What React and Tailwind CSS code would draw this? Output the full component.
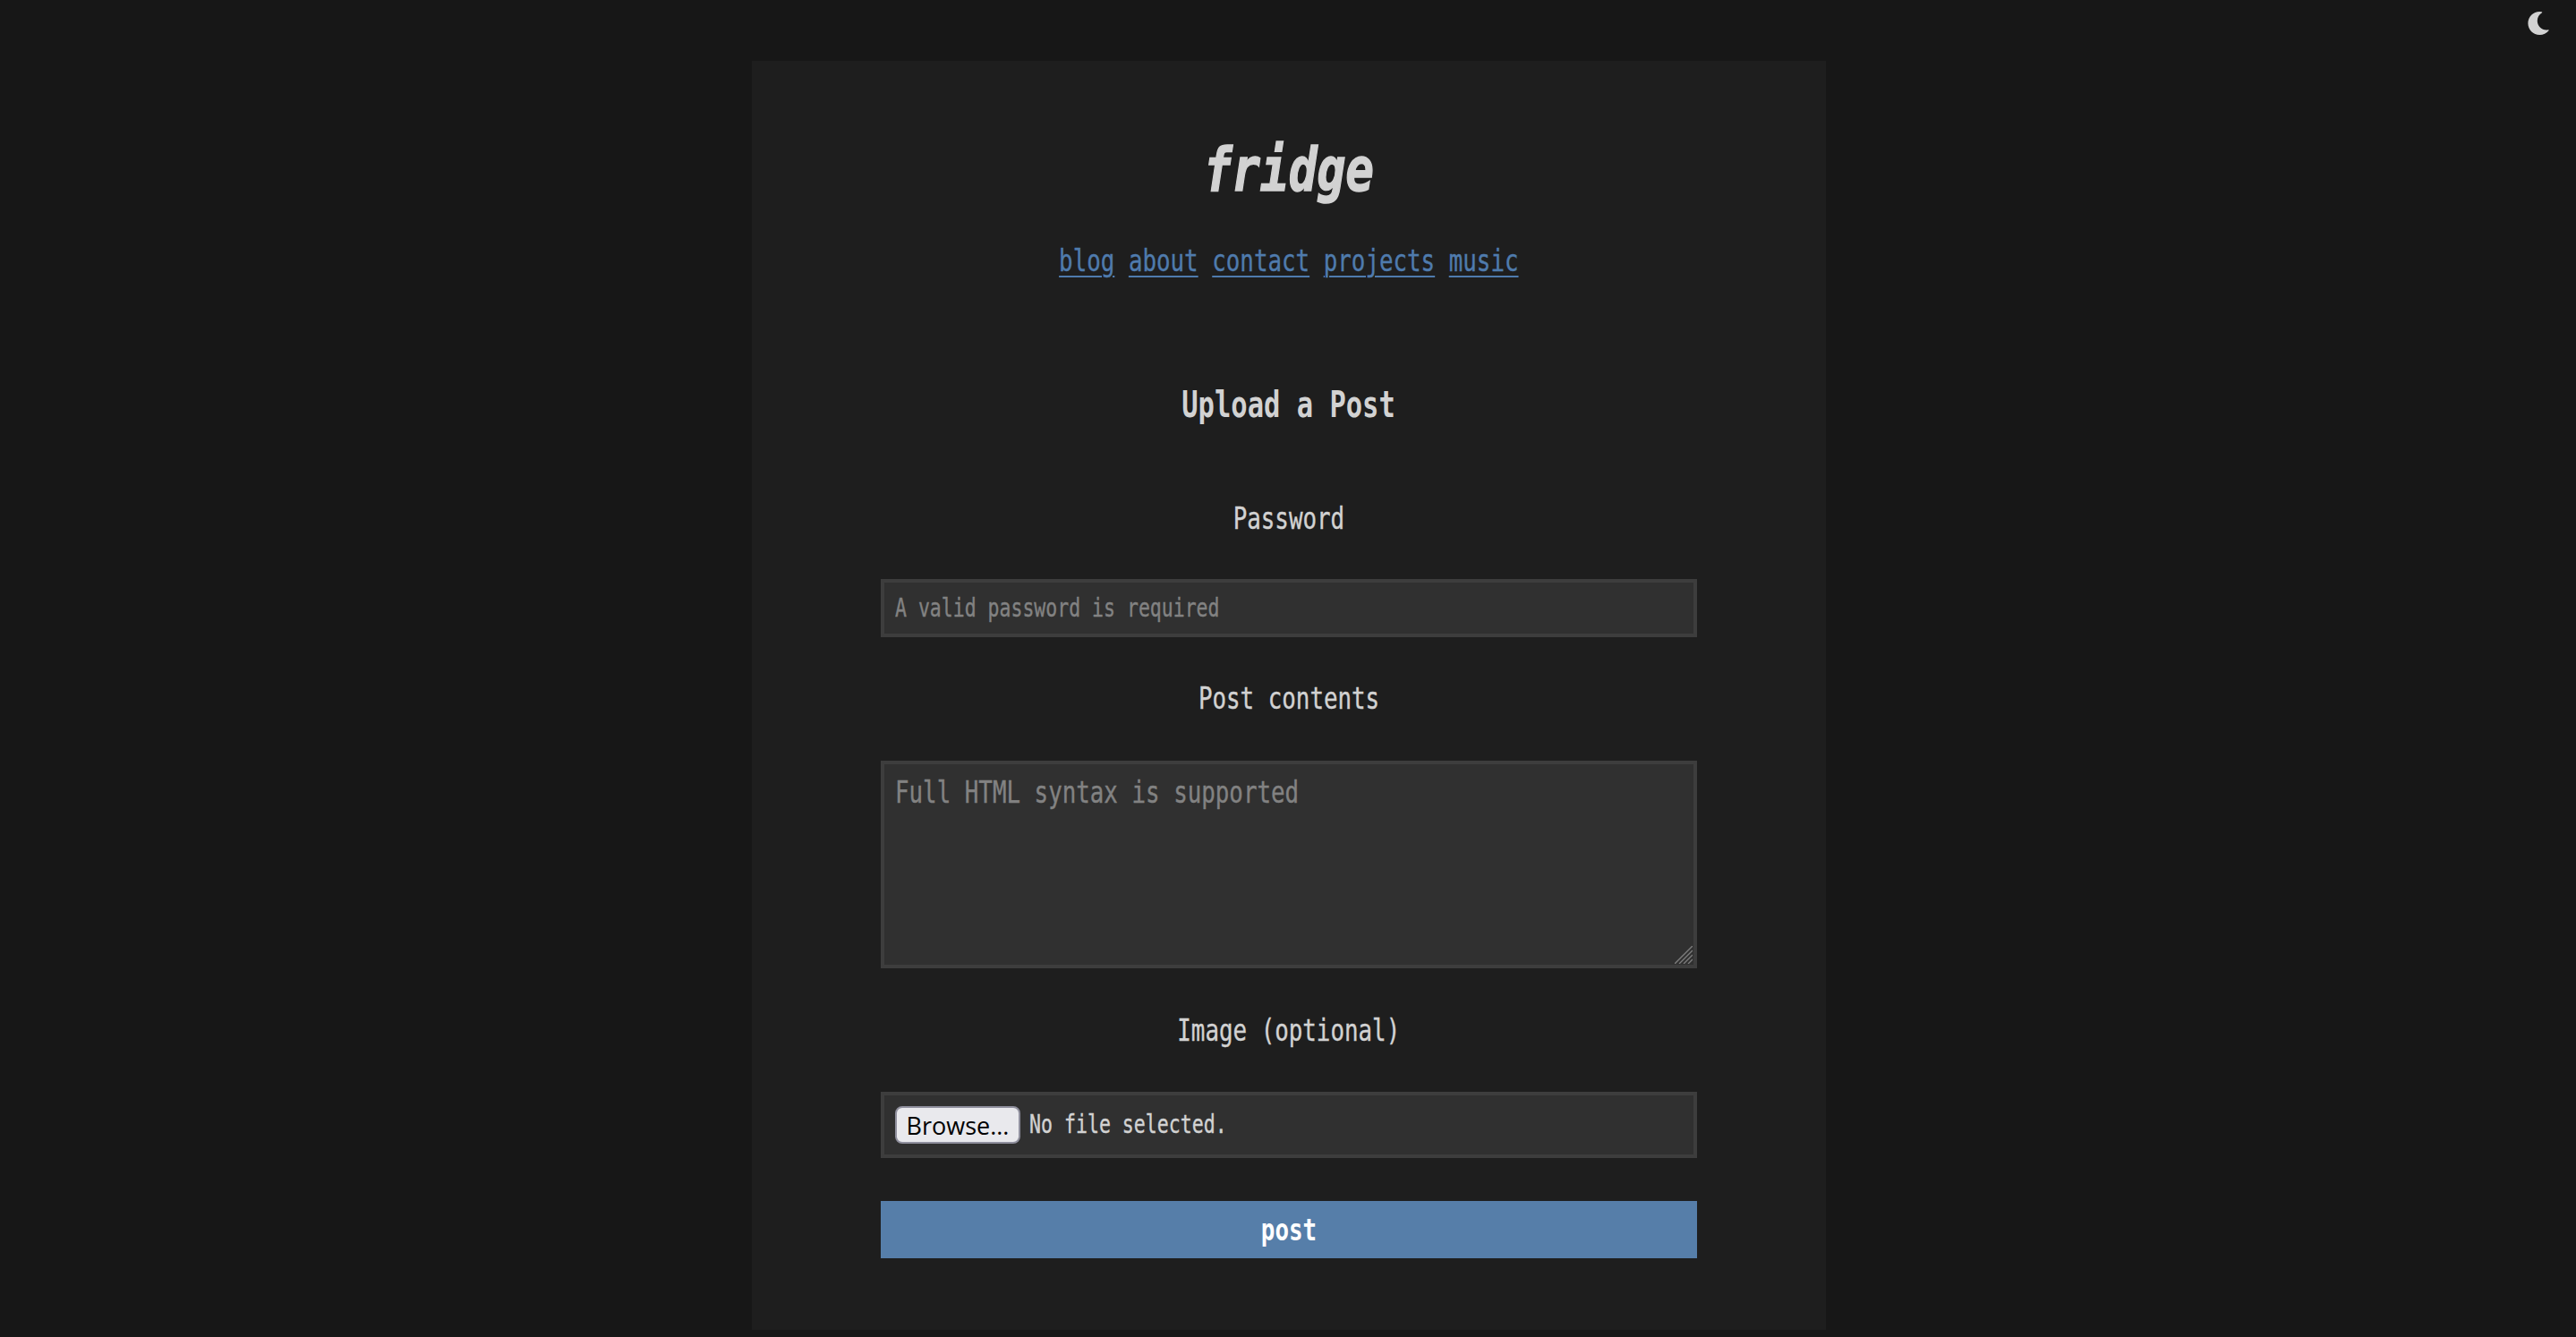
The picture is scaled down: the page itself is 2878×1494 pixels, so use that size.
import { FaMoon } from "react-icons/fa";

const mono = "font-['DejaVu_Sans_Mono',monospace]";

function Label({ children, className = "" }) {
  return (
    <div className={`h-10 flex justify-center items-center text-[34px] leading-10 text-[#d2d2d2] whitespace-pre [-webkit-text-stroke:0.4px_#d2d2d2] ${className}`}>
      <span className="inline-block scale-x-[0.76]">{children}</span>
    </div>
  );
}

export default function App() {
  return (
    <div className={`relative min-h-screen bg-[#171717] pt-[68px] pb-2 overflow-hidden ${mono}`}>
      <button className="absolute top-[13px] right-[29px] text-[#d2d2d2]" aria-label="theme">
        <FaMoon size={26} />
      </button>
      <main className="ml-[840px] w-[1200px] bg-[#1e1e1e] px-[144px] pt-[82px] pb-[80px]">
        <h1 className="h-20 flex justify-center items-center text-[68px] leading-[80px] font-bold italic text-[#d2d2d2] [-webkit-text-stroke:1.5px_#d2d2d2]">
          <span className="inline-block scale-x-[0.775]">fridge</span>
        </h1>
        <nav className="mt-[41px] h-10 flex justify-center items-center text-[34px] leading-10 text-[#4f7bad] whitespace-pre [-webkit-text-stroke:0.4px_#4f7bad]">
          <span className="inline-block scale-x-[0.76]">
            <a className="underline underline-offset-[5px] decoration-2" href="#">blog</a>{" "}
            <a className="underline underline-offset-[5px] decoration-2" href="#">about</a>{" "}
            <a className="underline underline-offset-[5px] decoration-2" href="#">contact</a>{" "}
            <a className="underline underline-offset-[5px] decoration-2" href="#">projects</a>{" "}
            <a className="underline underline-offset-[5px] decoration-2" href="#">music</a>
          </span>
        </nav>
        <h2 className="mt-[121px] h-10 flex justify-center items-center text-[40px] leading-10 font-bold text-[#d2d2d2] whitespace-pre">
          <span className="inline-block scale-x-[0.762]">Upload a Post</span>
        </h2>
        <form>
          <Label className="mt-[87px]">Password</Label>
          <input
            type="password"
            placeholder="A valid password is required"
            className="mt-[48px] block w-full h-[65px] bg-[#303030] border-4 border-[#3d3d3d] px-3 text-[28px] text-[#d2d2d2] outline-none [-webkit-text-stroke:0.4px_#828282] placeholder:text-[#828282] placeholder:opacity-100 placeholder:[transform:scaleX(0.768)] placeholder:origin-left"
          />
          <Label className="mt-[48px]">Post contents</Label>
          <div className="relative mt-[50px]">
            <textarea
              placeholder="Full HTML syntax is supported"
              className="block w-full h-[232px] resize-none bg-[#303030] border-4 border-[#3d3d3d] px-3 py-[11px] text-[34px] leading-[40px] text-[#d2d2d2] outline-none [-webkit-text-stroke:0.4px_#828282] placeholder:text-[#828282] placeholder:opacity-100 placeholder:[transform:scaleX(0.76)] placeholder:origin-left"
            />
            <svg className="absolute right-[5px] bottom-[5px]" width="20" height="20" viewBox="0 0 20 20" stroke="#7d7d7d" strokeWidth="1.4" fill="none">
              <path d="M0 20 20 0M5 20 20 5M10 20 20 10M15 20 20 15" />
            </svg>
          </div>
          <Label className="mt-[49px]">Image (optional)</Label>
          <div className="mt-[49px] h-[74px] bg-[#303030] border-4 border-[#3d3d3d] pl-3 flex items-center">
            <button type="button" className="w-[140px] h-[42px] shrink-0 rounded-lg border-2 border-[#8f8f9d] bg-[#e9e9ed] text-black text-[27px] leading-none font-['Open_Sans',sans-serif]">
              Browse...
            </button>
            <span className="ml-[10px] inline-block origin-left scale-x-[0.77] text-[28px] text-[#d2d2d2] whitespace-pre [-webkit-text-stroke:0.4px_#d2d2d2]">No file selected.</span>
          </div>
          <button type="button" className="mt-[48px] block w-full h-16 bg-[#567ea9] text-white text-[34px] font-bold leading-none">
            <span className="inline-block scale-x-[0.76]">post</span>
          </button>
        </form>
      </main>
    </div>
  );
}
